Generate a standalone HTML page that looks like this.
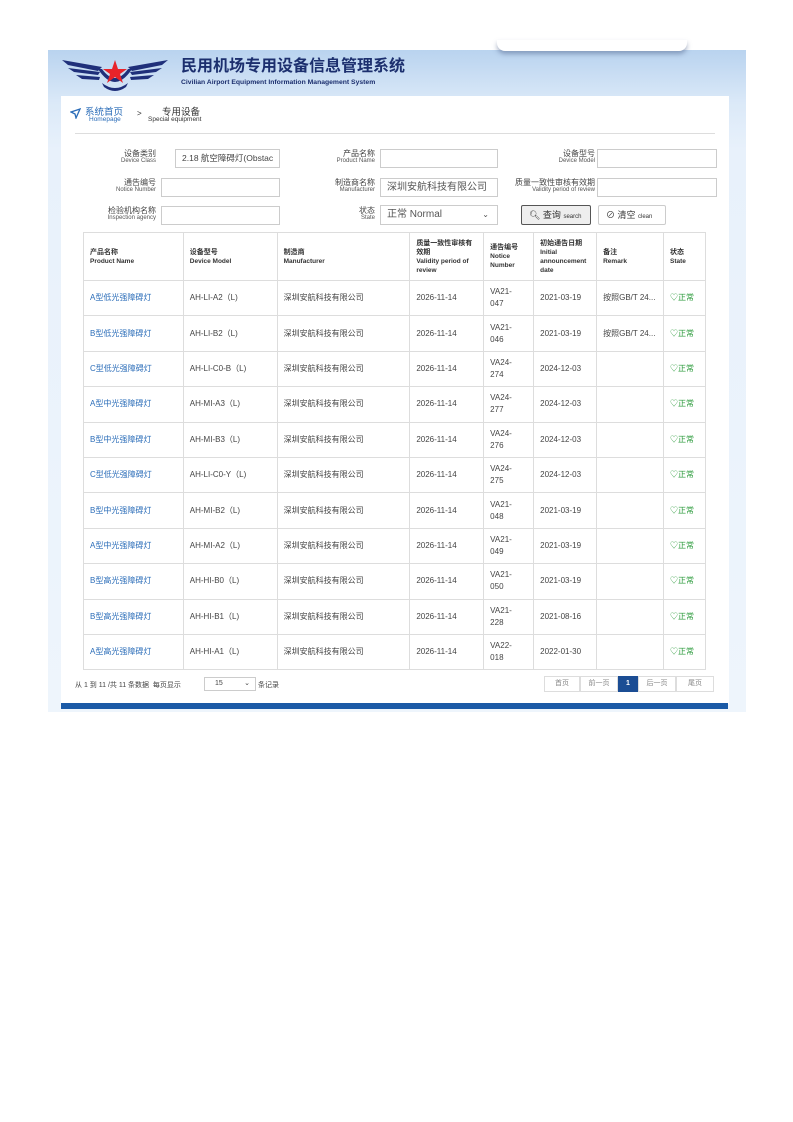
<!DOCTYPE html>
<html><head><meta charset="utf-8"><style>
*{margin:0;padding:0;box-sizing:border-box}
body{width:793px;height:1122px;background:#fff;position:relative;font-family:"Liberation Sans","Noto Sans CJK SC",sans-serif;color:#333;overflow:hidden}
.bg{position:absolute;left:48px;top:50px;width:698px;height:662px;background:linear-gradient(180deg,#b9d3ef 0%,#dbe9f8 8%,#e8f1fb 15%,#eef5fc 100%)}
.tab{position:absolute;left:497px;top:40px;width:190px;height:11px;background:#fff;border-radius:0 0 8px 8px;box-shadow:0 3px 5px rgba(80,100,140,.5)}
.panel{position:absolute;left:61px;top:96px;width:668px;height:608px;background:#fff}
.abs{position:absolute}
.t1{left:181px;top:57px;font-size:16px;line-height:20px;font-weight:bold;color:#1c2f6e}
.t2{left:181px;top:79px;font-size:6.8px;font-weight:bold;color:#1c2f6e}
.lbl{position:absolute;text-align:right;font-size:8px;line-height:9px;color:#444}
.lbl small{display:block;font-size:6px;line-height:7px;color:#555}
.inp{position:absolute;height:19px;border:1px solid #ccc;background:#fff;font-size:8.5px;line-height:17px;padding-left:6px;color:#444}
table{position:absolute;left:83px;top:232px;width:623px;border-collapse:collapse;font-size:8px}
td,th{border:1px solid #ddd;padding:0 6px;text-align:left;vertical-align:middle;font-weight:normal;color:#444}
th{height:48px;font-size:7px;line-height:9px;font-weight:bold;color:#333}
th span{font-weight:bold;font-size:6.5px}
td{height:35.4px;line-height:12px}
td.a{color:#2a6cb8}
td.s{color:#2a9a3a}
.pg{position:absolute;top:676px;height:16px;border:1px solid #ddd;font-size:7px;line-height:14px;text-align:center;color:#888}
</style></head><body>
<div class="bg"></div>
<div class="tab"></div>
<svg class="abs" style="left:58px;top:55px" width="114" height="38" viewBox="0 0 114 38">
<path d="M4 5 L44 12 L40 16 L10 10Z M10 13 L42 17 L40 20 L16 17Z M18 20 L42 22 L41 25 L24 24Z" fill="#1f2f7a"/>
<path d="M110 5 L70 12 L74 16 L104 10Z M104 13 L72 17 L74 20 L98 17Z M96 20 L72 22 L73 25 L90 24Z" fill="#1f2f7a"/>
<path d="M40 14 Q57 40 74 14 L70 14 Q57 32 44 14Z" fill="#1f2f7a"/>
<path d="M44 28 Q57 38 70 28 L68 32 Q57 40 46 32Z" fill="#1f2f7a"/>
<polygon points="57,5 60,14 69,14 62,19 65,28 57,22 49,28 52,19 45,14 54,14" fill="#e8232a"/>
</svg>
<div class="abs t1">民用机场专用设备信息管理系统</div>
<div class="abs t2">Civilian Airport Equipment Information Management System</div>
<div class="panel"></div>
<svg class="abs" style="left:70px;top:108px" width="11" height="11" viewBox="0 0 11 11"><path d="M1 4 L10 1 L6 10 L5 6Z" fill="none" stroke="#2a6cb8" stroke-width="1.3"/></svg>
<div class="abs" style="left:85px;top:104px;font-size:9.5px;color:#2a6cb8">系统首页</div>
<div class="abs" style="left:89px;top:116px;font-size:6.5px;color:#2a6cb8">Homepage</div>
<div class="abs" style="left:137px;top:109px;font-size:8px;color:#333">&gt;</div>
<div class="abs" style="left:162px;top:104px;font-size:9.5px;color:#333">专用设备</div>
<div class="abs" style="left:148px;top:116px;font-size:6.5px;color:#333">Special equipment</div>
<div class="abs" style="left:75px;top:133px;width:640px;height:1px;background:#ddd"></div>

<div class="lbl" style="right:637px;top:149px">设备类别<small>Device Class</small></div>
<div class="inp" style="left:175px;top:149px;width:105px">2.18 航空障碍灯(Obstac</div>
<div class="lbl" style="right:418px;top:149px">产品名称<small>Product Name</small></div>
<div class="inp" style="left:380px;top:149px;width:118px"></div>
<div class="lbl" style="right:198px;top:149px">设备型号<small>Device Model</small></div>
<div class="inp" style="left:597px;top:149px;width:120px"></div>

<div class="lbl" style="right:637px;top:178px">通告编号<small>Notice Number</small></div>
<div class="inp" style="left:161px;top:178px;width:119px"></div>
<div class="lbl" style="right:418px;top:178px">制造商名称<small>Manufacturer</small></div>
<div class="inp" style="left:380px;top:178px;width:118px;font-size:10px;color:#555">深圳安航科技有限公司</div>
<div class="lbl" style="right:198px;top:178px">质量一致性审核有效期<small>Validity period of review</small></div>
<div class="inp" style="left:597px;top:178px;width:120px"></div>

<div class="lbl" style="right:637px;top:206px">检验机构名称<small>Inspection agency</small></div>
<div class="inp" style="left:161px;top:206px;width:119px"></div>
<div class="lbl" style="right:418px;top:206px">状态<small>State</small></div>
<div class="inp" style="left:380px;top:205px;width:118px;height:20px;font-size:10px;color:#555;line-height:18px">正常 Normal<span style="position:absolute;right:8px;font-size:8px">⌄</span></div>
<div class="inp" style="left:521px;top:205px;width:70px;height:20px;border:1px solid #555;background:#eee;border-radius:2px;font-size:9px;color:#333;line-height:18px;padding-left:7px">🔍︎ 查询 <span style="font-size:6px">search</span></div>
<div class="inp" style="left:598px;top:205px;width:68px;height:20px;border-radius:2px;font-size:9px;color:#333;line-height:18px;padding-left:7px">⊘ 清空 <span style="font-size:6px">clean</span></div>

<table>
<colgroup><col style="width:100px"><col style="width:94px"><col style="width:133px"><col style="width:74px"><col style="width:50px"><col style="width:63px"><col style="width:67px"><col style="width:42px"></colgroup>
<tr><th>产品名称<br><span>Product Name</span></th><th>设备型号<br><span>Device Model</span></th><th>制造商<br><span>Manufacturer</span></th><th>质量一致性审核有效期<br><span>Validity period of review</span></th><th>通告编号<br><span>Notice Number</span></th><th>初始通告日期<br><span>Initial announcement date</span></th><th>备注<br><span>Remark</span></th><th>状态<br><span>State</span></th></tr>
<tr><td class="a">A型低光强障碍灯</td><td>AH-LI-A2（L)</td><td>深圳安航科技有限公司</td><td>2026-11-14</td><td>VA21-<br>047</td><td>2021-03-19</td><td>按照GB/T 24...</td><td class="s">♡正常</td></tr>
<tr><td class="a">B型低光强障碍灯</td><td>AH-LI-B2（L)</td><td>深圳安航科技有限公司</td><td>2026-11-14</td><td>VA21-<br>046</td><td>2021-03-19</td><td>按照GB/T 24...</td><td class="s">♡正常</td></tr>
<tr><td class="a">C型低光强障碍灯</td><td>AH-LI-C0-B（L)</td><td>深圳安航科技有限公司</td><td>2026-11-14</td><td>VA24-<br>274</td><td>2024-12-03</td><td></td><td class="s">♡正常</td></tr>
<tr><td class="a">A型中光强障碍灯</td><td>AH-MI-A3（L)</td><td>深圳安航科技有限公司</td><td>2026-11-14</td><td>VA24-<br>277</td><td>2024-12-03</td><td></td><td class="s">♡正常</td></tr>
<tr><td class="a">B型中光强障碍灯</td><td>AH-MI-B3（L)</td><td>深圳安航科技有限公司</td><td>2026-11-14</td><td>VA24-<br>276</td><td>2024-12-03</td><td></td><td class="s">♡正常</td></tr>
<tr><td class="a">C型低光强障碍灯</td><td>AH-LI-C0-Y（L)</td><td>深圳安航科技有限公司</td><td>2026-11-14</td><td>VA24-<br>275</td><td>2024-12-03</td><td></td><td class="s">♡正常</td></tr>
<tr><td class="a">B型中光强障碍灯</td><td>AH-MI-B2（L)</td><td>深圳安航科技有限公司</td><td>2026-11-14</td><td>VA21-<br>048</td><td>2021-03-19</td><td></td><td class="s">♡正常</td></tr>
<tr><td class="a">A型中光强障碍灯</td><td>AH-MI-A2（L)</td><td>深圳安航科技有限公司</td><td>2026-11-14</td><td>VA21-<br>049</td><td>2021-03-19</td><td></td><td class="s">♡正常</td></tr>
<tr><td class="a">B型高光强障碍灯</td><td>AH-HI-B0（L)</td><td>深圳安航科技有限公司</td><td>2026-11-14</td><td>VA21-<br>050</td><td>2021-03-19</td><td></td><td class="s">♡正常</td></tr>
<tr><td class="a">B型高光强障碍灯</td><td>AH-HI-B1（L)</td><td>深圳安航科技有限公司</td><td>2026-11-14</td><td>VA21-<br>228</td><td>2021-08-16</td><td></td><td class="s">♡正常</td></tr>
<tr><td class="a">A型高光强障碍灯</td><td>AH-HI-A1（L)</td><td>深圳安航科技有限公司</td><td>2026-11-14</td><td>VA22-<br>018</td><td>2022-01-30</td><td></td><td class="s">♡正常</td></tr>
</table>

<div class="abs" style="left:75px;top:680px;font-size:7px;color:#444">从 1 到 11 /共 11 条数据 &nbsp;每页显示</div>
<div class="inp" style="left:204px;top:677px;width:52px;height:14px;font-size:7px;line-height:12px;padding-left:10px">15<span style="position:absolute;right:5px">⌄</span></div>
<div class="abs" style="left:258px;top:680px;font-size:7px;color:#444">条记录</div>
<div class="pg" style="left:544px;width:36px">首页</div>
<div class="pg" style="left:580px;width:38px">前一页</div>
<div class="pg" style="left:618px;width:20px;background:#1b4d94;border-color:#1b4d94;color:#fff;font-weight:bold">1</div>
<div class="pg" style="left:638px;width:38px">后一页</div>
<div class="pg" style="left:676px;width:38px">尾页</div>
<div class="abs" style="left:61px;top:703px;width:667px;height:6px;background:#1b5aa6"></div>
</body></html>
